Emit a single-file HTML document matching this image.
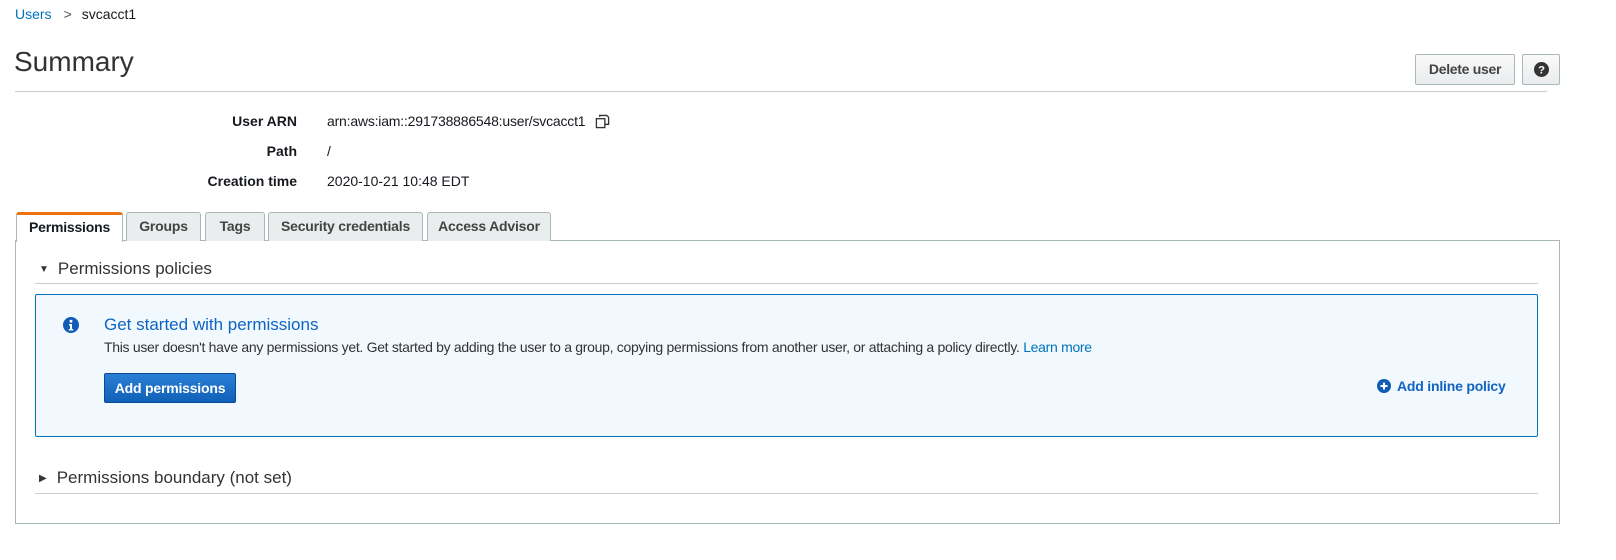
<!DOCTYPE html>
<html><head><meta charset="utf-8"><style>
*{box-sizing:border-box;margin:0;padding:0}
body{width:1616px;height:560px;background:#fff;font-family:"Liberation Sans",sans-serif;color:#16191f;position:relative;overflow:hidden;font-size:14px}
.a{position:absolute;white-space:nowrap}
.lbl{font-weight:bold;text-align:right;width:200px;left:97px;font-size:14px;color:#16191f}
.val{left:327px;font-size:14px;color:#16191f}
.tab{position:absolute;top:212px;height:29px;border:1px solid #aab7b8;border-bottom:none;background:#eaeded;border-radius:3px 3px 0 0;font-weight:bold;font-size:14px;text-align:center;line-height:27px;color:#444;letter-spacing:-0.2px}
.btn{position:absolute;border:1px solid #aab7b8;border-radius:2px;background:linear-gradient(#fafafa,#e9ebed);font-weight:bold;font-size:14px;text-align:center;color:#444}
</style></head><body>
<div class="a" style="left:15px;top:6px;font-size:14px"><span style="color:#0073bb">Users</span><span style="color:#555;margin:0 10px 0 12px">&gt;</span>svcacct1</div>
<div class="a" style="left:14px;top:46px;font-size:28px;color:#333">Summary</div>
<div class="btn" style="left:1415px;top:54px;width:100px;height:31px;line-height:29px;letter-spacing:-0.3px">Delete user</div>
<div class="btn" style="left:1522px;top:54px;width:38px;height:31px;padding-top:7px"><svg width="15" height="15" viewBox="0 0 16 16"><circle cx="8" cy="8" r="8" fill="#333"/><text x="8" y="12.5" font-size="12" font-weight="bold" fill="#fff" text-anchor="middle" font-family="Liberation Sans">?</text></svg></div>
<div class="a" style="left:15px;top:91px;width:1532px;height:1px;background:#ccc"></div>
<div class="a lbl" style="top:113px">User ARN</div>
<div class="a val" style="top:113px;letter-spacing:-0.2px">arn:aws:iam::291738886548:user/svcacct1 <svg style="margin-left:6px;vertical-align:-3px" width="15" height="15" viewBox="0 0 16 16" fill="none" stroke="#333" stroke-width="1.4"><path d="M5 3V1.5h7.5l2 2V11H11"/><rect x="1.5" y="5" width="9" height="9.5"/></svg></div>
<div class="a lbl" style="top:143px">Path</div>
<div class="a val" style="top:143px">/</div>
<div class="a lbl" style="top:173px">Creation time</div>
<div class="a val" style="top:173px">2020-10-21 10:48 EDT</div>
<div class="a" style="left:15px;top:240px;width:1545px;height:284px;border:1px solid #aab7b8"></div>
<div class="tab" style="left:16px;width:107px;background:#fff;height:30px;border-top:3px solid #ec7211;color:#16191f;line-height:25px">Permissions</div>
<div class="tab" style="left:126px;width:75px">Groups</div>
<div class="tab" style="left:205px;width:60px">Tags</div>
<div class="tab" style="left:268px;width:155px">Security credentials</div>
<div class="tab" style="left:427px;width:124px">Access Advisor</div>
<div class="a" style="left:39px;top:259px;font-size:17px;color:#333"><span style="font-size:10px;margin-right:9px;vertical-align:2px">&#9660;</span>Permissions policies</div>
<div class="a" style="left:35px;top:283px;width:1503px;height:1px;background:#ccc"></div>
<div class="a" style="left:35px;top:294px;width:1503px;height:143px;border:1px solid #0073bb;background:#f1f8fe;border-radius:2px"></div>
<svg class="a" style="left:63px;top:317px" width="16" height="16" viewBox="0 0 16 16"><circle cx="8" cy="8" r="8" fill="#0f5bb5"/><circle cx="8" cy="4.2" r="1.5" fill="#fff"/><path d="M6 7h3v5h1.2v1.5H5.8V12H7V8.5H6z" fill="#fff"/></svg>
<div class="a" style="left:104px;top:315px;font-size:17px;color:#0f64c2">Get started with permissions</div>
<div class="a" style="left:104px;top:339px;font-size:14px;color:#333;letter-spacing:-0.3px">This user doesn't have any permissions yet. Get started by adding the user to a group, copying permissions from another user, or attaching a policy directly. <span style="color:#0073bb">Learn more</span></div>
<div class="a" style="left:104px;top:373px;width:132px;height:30px;background:linear-gradient(#2a7fd4,#1060b8);border:1px solid #0a4a94;border-radius:2px;color:#fff;font-weight:bold;font-size:14px;text-align:center;line-height:28px;letter-spacing:-0.2px">Add permissions</div>
<div class="a" style="left:1377px;top:378px;font-size:14px;font-weight:bold;color:#0f64c2;letter-spacing:-0.2px"><svg style="vertical-align:-2px;margin-right:6px" width="14" height="14" viewBox="0 0 16 16"><circle cx="8" cy="8" r="8" fill="#0f5bb5"/><path d="M8 4v8M4 8h8" stroke="#fff" stroke-width="2.4"/></svg>Add inline policy</div>
<div class="a" style="left:39px;top:468px;font-size:17px;color:#333"><span style="font-size:10px;margin-right:10px;vertical-align:2px">&#9654;</span>Permissions boundary (not set)</div>
<div class="a" style="left:35px;top:493px;width:1503px;height:1px;background:#ccc"></div>
</body></html>
